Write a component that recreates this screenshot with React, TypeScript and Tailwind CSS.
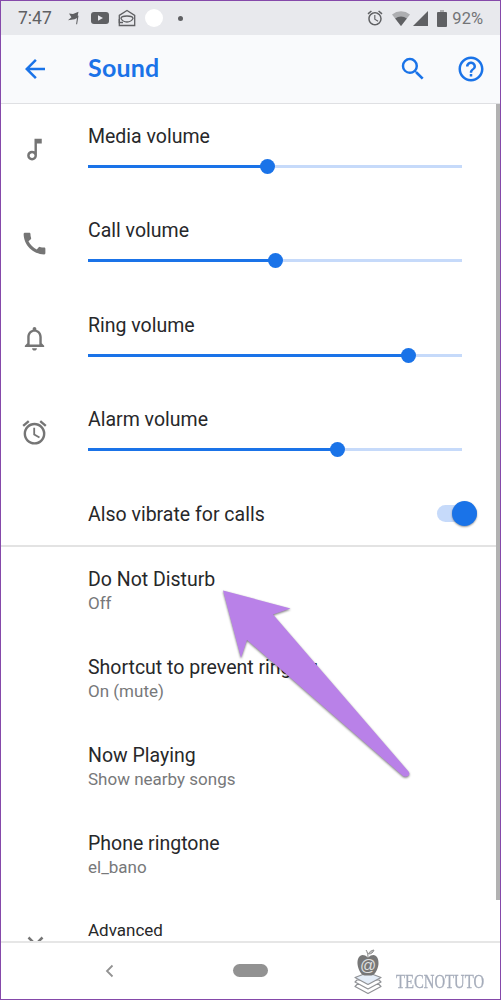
import React from 'react'
import { IconType } from 'react-icons'
import {
  MdAlarm,
  MdArrowBack,
  MdCall,
  MdHelpOutline,
  MdNotificationsNone,
  MdOutlineMusicNote,
  MdSearch,
} from 'react-icons/md'

type VolumeRowProps = {
  icon: IconType
  label: string
  value: number
}

const volumes: VolumeRowProps[] = [
  { icon: MdOutlineMusicNote, label: 'Media volume', value: 48 },
  { icon: MdCall, label: 'Call volume', value: 50 },
  { icon: MdNotificationsNone, label: 'Ring volume', value: 85.6 },
  { icon: MdAlarm, label: 'Alarm volume', value: 66.7 },
]

const settings = [
  { title: 'Do Not Disturb', summary: 'Off' },
  { title: 'Shortcut to prevent ringing', summary: 'On (mute)' },
  { title: 'Now Playing', summary: 'Show nearby songs' },
  { title: 'Phone ringtone', summary: 'el_bano' },
]

const StatusBar: React.FC = () => (
  <div className="flex h-[34px] shrink-0 items-center bg-[#e8e9ed] pl-[17px] pr-[17px] text-[#5f6063]">
    <span className="w-[50px] pt-px text-[17.5px] leading-none">7:47</span>
    <svg className="h-[14px] w-[12px]" viewBox="0 0 12 14" fill="currentColor">
      <path d="M1 2.5 5 3l5.5-2.2-.8 3.6.8.3-1.4 8.5h-1L9 7 6.6 8.2 0 9.3l3.4-3Z" />
    </svg>
    <svg className="ml-[11px] h-[12px] w-[18px]" viewBox="0 0 18 12">
      <rect width="18" height="12" rx="3" fill="currentColor" />
      <path d="m7 3.3 5 2.7-5 2.7Z" fill="#e8e9ed" />
    </svg>
    <svg
      className="ml-[9px] h-[18px] w-[18px]"
      viewBox="0 0 18 18"
      fill="none"
      stroke="currentColor"
      strokeWidth="1.3"
    >
      <path d="M1.3 6.4 9 1.5l7.7 4.9v10.1H1.3Z" />
      <path d="M3 9.5Q3 7 9 7t6 2.5q-2 3.500-6 3.500T3 9.500Zm-1.700.500v3.500H5" />
    </svg>
    <span className="ml-[9px] h-[18px] w-[18px] rounded-full bg-white" />
    <span className="ml-[15px] h-[5px] w-[5px] rounded-full bg-[#5f6063]" />
    <div className="flex flex-1 items-center justify-end">
      <MdAlarm className="text-[18px]" />
      <svg className="ml-[8px] h-[15px] w-[18px]" viewBox="0 0 18 15">
        <path d="M0 3.5a14.5 14.5 0 0 1 18 0L9 15Z" fill="#adaeb1" />
        <path d="M3.2 7.6a9.5 9.5 0 0 1 11.6 0L9 15Z" fill="currentColor" />
      </svg>
      <svg className="ml-[3px] h-[15px] w-[15px]" viewBox="0 0 15 15" fill="currentColor">
        <path d="M15 0v15H0Z" />
      </svg>
      <svg className="ml-[9px] h-[17px] w-[10px]" viewBox="0 0 10 17">
        <path d="M3 0h4v2H3Z" fill="#adaeb1" />
        <rect y="2" width="10" height="15" rx="1" fill="currentColor" />
      </svg>
      <span className="ml-[5px] pt-[2px] text-[16.5px] leading-none text-[#737477]">92%</span>
    </div>
  </div>
)

const Header: React.FC = () => (
  <div className="flex h-[69px] shrink-0 items-center border-b border-[#dfe0e3] bg-[#f9fafc] pl-[19px] pr-[14px] text-[#1a73e8]">
    <MdArrowBack className="text-[30px]" />
    <h1 className="ml-[38px] flex-1 pb-[2px] font-[Lato,sans-serif] text-[25px] font-bold tracking-[0.2px]">
      Sound
    </h1>
    <MdSearch className="text-[30px]" />
    <MdHelpOutline className="ml-[28px] text-[30px]" />
  </div>
)

const VolumeRow: React.FC<VolumeRowProps> = ({ icon: Icon, label, value }) => (
  <div className="flex h-[94.3px] shrink-0">
    <div className="w-[87px] shrink-0 pl-[19px] pt-[31px]">
      <Icon className="text-[29px] text-[#757575]" />
    </div>
    <div className="w-[374px] pt-[21px]">
      <div className="text-[19.5px] leading-[24px]">{label}</div>
      <div className="mt-[10px] flex h-[15px] items-center">
        <div className="h-[3px] bg-[#1a73e8]" style={{ width: `${value}%` }} />
        <div className="z-10 -mx-[7.5px] h-[15px] w-[15px] shrink-0 rounded-full bg-[#1a73e8]" />
        <div className="h-[3px] flex-1 bg-[#c6dafa]" />
      </div>
    </div>
  </div>
)

const NavigationBar: React.FC = () => (
  <div className="flex h-[58px] shrink-0 items-start border-t-2 border-[#e6e6e6] bg-white">
    <svg
      className="ml-[103px] mt-[21px] h-[14px] w-[10px] shrink-0"
      viewBox="0 0 10 14"
      fill="none"
      stroke="#929292"
      strokeWidth="1.8"
    >
      <path d="M8.5 1.5 3 7l5.5 5.5" />
    </svg>
    <div className="ml-[119px] mt-[21px] h-[13px] w-[35px] shrink-0 rounded-full bg-[#929292]" />
    <svg className="ml-[85px] mt-[5px] h-[50px] w-[30px] shrink-0" viewBox="0 0 30 50">
      <g fill="#fff" stroke="#909296" strokeWidth="1.2" strokeLinejoin="round">
        <path d="m2 38.5 13 7 13-7-2-2H4Z" />
        <path d="m2 34 13 7 13-7-2-2H4Z" />
        <path d="m2 29.5 13-5 13 5-13 7Z" fill="#e4edf8" />
      </g>
      <path
        d="M15 9.5C9 4 4 8 4.5 16c.6 6 4 11.5 7.3 11.5h6.4c3.3 0 6.7-5.5 7.3-11.5C26 8 21 4 15 9.5Z"
        fill="#777"
      />
      <path d="M15 9c0-3-.5-5-2-7M15.5 6c.5-2 2.500-3.500 5.500-4-1 3-3 4-5.500 4Z" fill="#bbb" stroke="#909090" />
      <text
        x="15"
        y="22.5"
        fontSize="16"
        textAnchor="middle"
        fill="#e0e0e0"
        className="font-['Liberation_Sans',sans-serif]"
      >
        @
      </text>
    </svg>
    <span className="ml-[13px] mt-[27px] w-[90px] shrink-0 origin-left scale-x-[0.775] whitespace-nowrap font-['Liberation_Serif',serif] text-[19px] leading-[24px] text-[#a5acba] [-webkit-text-stroke:0.3px_#a5acba]">
      TECNOTUTO
    </span>
  </div>
)

const App: React.FC = () => (
  <div className="relative flex h-[1000px] w-[501px] flex-col overflow-hidden border border-[#8549aa] bg-white font-[Roboto,sans-serif] text-[#27282a]">
    <StatusBar />
    <Header />
    <div className="relative flex min-h-0 flex-1 flex-col overflow-hidden">
      {volumes.map((volume) => (
        <VolumeRow key={volume.label} {...volume} />
      ))}
      <div className="flex h-[66px] shrink-0 items-center justify-between border-b-2 border-[#e3e3e3] pl-[87px] pr-[23px]">
        <span className="pt-[2px] text-[19.5px]">Also vibrate for calls</span>
        <div className="flex h-[17px] w-[40px] items-center justify-end rounded-full bg-[#c6dafa]">
          <div className="h-[25px] w-[25px] shrink-0 rounded-full bg-[#1a73e8] shadow-[0_1px_2px_#0006]" />
        </div>
      </div>
      {settings.map(({ title, summary }) => (
        <div key={title} className="h-[88px] shrink-0 pl-[87px] pt-[21px]">
          <div className="text-[19.5px] leading-[24px]">{title}</div>
          <div className="text-[17px] leading-[22px] text-[#77787a]">{summary}</div>
        </div>
      ))}
      <div className="flex shrink-0 items-start pt-[19px]">
        <svg
          className="ml-[26px] mt-[18px] h-[12px] w-[61px]"
          viewBox="0 0 61 12"
          fill="none"
          stroke="#757575"
          strokeWidth="2.5"
        >
          <path d="m1.500 1.500 7 7 7-7" />
        </svg>
        <span className="text-[17px] leading-[24px]">Advanced</span>
      </div>
      <div className="absolute right-0 top-0 h-[796px] w-[4px] bg-[#b2b2b2]" />
    </div>
    <NavigationBar />

    <svg
      className="absolute left-[219px] top-[586px] h-[196px] w-[196px] drop-shadow-[0_1px_1px_#0008]"
      viewBox="220 587 196 196"
      fill="#b981e8"
    >
      <path d="m223 590.5 67.5 18-17.5 6 135.5 157q2 3-.5 4.500t-5 0L247 640l-6 18Z" />
    </svg>
    <div className="absolute -bottom-px -right-px h-[54px] w-[154px] border-b border-r border-[#c9addd]" />
  </div>
)

export default App
